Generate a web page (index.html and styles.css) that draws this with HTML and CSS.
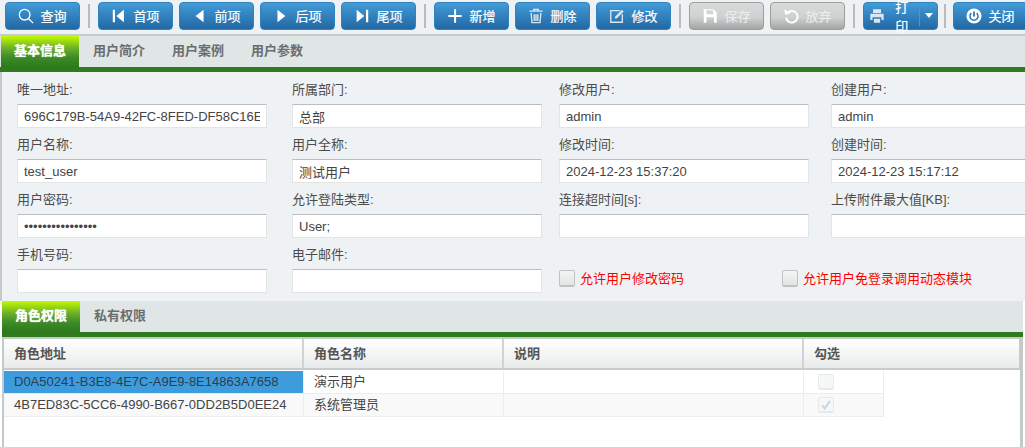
FILE: index.html
```html
<!DOCTYPE html>
<html lang="zh-CN">
<head>
<meta charset="utf-8">
<title>用户管理</title>
<link rel="stylesheet" href="styles.css">
</head>
<body>
<div class="toolbar">
  <button class="btn"><svg class="ico" viewBox="0 0 18 18"><circle cx="7.5" cy="7.5" r="6" class="st"/><path d="M12 12l5 5" class="st"/></svg>查询</button>
  <span class="sep"></span>
  <button class="btn"><svg class="ico" viewBox="0 0 18 18"><path d="M2 2h2.5v14H2zM14.5 2v14L6 9z" class="fl"/></svg>首项</button>
  <button class="btn"><svg class="ico" viewBox="0 0 18 18"><path d="M13 2v14L4 9z" class="fl"/></svg>前项</button>
  <button class="btn"><svg class="ico" viewBox="0 0 18 18"><path d="M5 2v14l9-7z" class="fl"/></svg>后项</button>
  <button class="btn"><svg class="ico" viewBox="0 0 18 18"><path d="M3 2v14l8.5-7zM13.5 2H16v14h-2.5z" class="fl"/></svg>尾项</button>
  <span class="sep"></span>
  <button class="btn"><svg class="ico" viewBox="0 0 18 18"><path d="M8 1.500h2.200V8h6.300v2.200h-6.300v6.300H8v-6.300H1.500V8H8z" class="fl"/></svg>新增</button>
  <button class="btn"><svg class="ico dim" viewBox="0 0 18 18"><path d="M1.500 3.500h15M6.500 3V1.500h5V3" class="st"/><path d="M3.500 5.500l1 11h9l1-11M7 7v7.500M9 7v7.500M11 7v7.500" class="st"/></svg>删除</button>
  <button class="btn"><svg class="ico dim" viewBox="0 0 18 18"><path d="M12 3H2v13h13V7" class="st"/><path d="M7 9.500L14.500 2 16.500 4 9 11.500l-2.500.5z" class="fl"/></svg>修改</button>
  <span class="sep"></span>
  <button class="btn off"><svg class="ico" viewBox="0 0 18 18"><path d="M2 1.500h11l3.500 3.500v11.500H2zM5 2.500v4.500h7.500V2.500zM5 10.500v6h8.500v-6z" class="fl" fill-rule="evenodd"/></svg>保存</button>
  <button class="btn off"><svg class="ico" viewBox="0 0 18 18"><path d="M5 5.500A6.500 6.500 0 1 1 3.500 11" class="st wide"/><path d="M1.500 1.500l1 6.500 6-2z" class="fl"/></svg>放弃</button>
  <span class="sep"></span>
  <button class="btn print"><svg class="ico dim" viewBox="0 0 18 18"><path d="M4.500 1.500h9v4h-9zM1.500 6.500h15v7h-2.500v-3h-10v3H1.500zM5.500 12h7v4.500h-7z" class="fl"/></svg>打印<span class="caret-box"><span class="caret"></span></span></button>
  <span class="sep narrow"></span>
  <button class="btn"><svg class="ico" viewBox="0 0 18 18"><circle cx="9" cy="9" r="8.500" class="fl"/><path d="M9 4v5.500" class="blue"/><path d="M6 5.800a4.500 4.500 0 1 0 6 0" class="blue thin"/></svg>关闭</button>
</div>

<div class="tabs">
  <span class="tab active">基本信息</span>
  <span class="tab">用户简介</span>
  <span class="tab">用户案例</span>
  <span class="tab">用户参数</span>
</div>

<form class="form">
  <label class="field"><span class="lbl">唯一地址:</span><input class="inp" value="696C179B-54A9-42FC-8FED-DF58C16E"></label>
  <label class="field"><span class="lbl">所属部门:</span><input class="inp" value="总部"></label>
  <label class="field"><span class="lbl">修改用户:</span><input class="inp" value="admin"></label>
  <label class="field"><span class="lbl">创建用户:</span><input class="inp" value="admin"></label>
  <label class="field"><span class="lbl">用户名称:</span><input class="inp" value="test_user"></label>
  <label class="field"><span class="lbl">用户全称:</span><input class="inp" value="测试用户"></label>
  <label class="field"><span class="lbl">修改时间:</span><input class="inp" value="2024-12-23 15:37:20"></label>
  <label class="field"><span class="lbl">创建时间:</span><input class="inp" value="2024-12-23 15:17:12"></label>
  <label class="field"><span class="lbl">用户密码:</span><input class="inp" type="password" value="1234567890123456"></label>
  <label class="field"><span class="lbl">允许登陆类型:</span><input class="inp" value="User;"></label>
  <label class="field"><span class="lbl">连接超时间[s]:</span><input class="inp"></label>
  <label class="field"><span class="lbl">上传附件最大值[KB]:</span><input class="inp"></label>
  <label class="field"><span class="lbl">手机号码:</span><input class="inp"></label>
  <label class="field"><span class="lbl">电子邮件:</span><input class="inp"></label>
  <div class="checks">
    <div class="chk chk-first"><span class="box"></span>允许用户修改密码</div>
    <div class="chk"><span class="box"></span>允许用户免登录调用动态模块</div>
  </div>
</form>

<div class="tabs tabs-sub">
  <span class="tab active">角色权限</span>
  <span class="tab">私有权限</span>
</div>

<div class="grid">
  <div class="ghead">
    <div class="gh c1">角色地址</div>
    <div class="gh c2">角色名称</div>
    <div class="gh c3">说明</div>
    <div class="gh c4w">勾选</div>
  </div>
  <div class="grow">
    <div class="gc c1 sel">D0A50241-B3E8-4E7C-A9E9-8E14863A7658</div>
    <div class="gc c2">演示用户</div>
    <div class="gc c3"></div>
    <div class="gc c4"><span class="box pale"></span></div>
  </div>
  <div class="grow alt">
    <div class="gc c1">4B7ED83C-5CC6-4990-B667-0DD2B5D0EE24</div>
    <div class="gc c2">系统管理员</div>
    <div class="gc c3"></div>
    <div class="gc c4"><span class="box pale"><svg viewBox="0 0 14 14" class="tick"><path d="M2.500 7.500l3 3.500 6-8.500"/></svg></span></div>
  </div>
</div>
</body>
</html>
```

FILE: styles.css
```css
* { box-sizing: border-box; }
html, body { margin: 0; padding: 0; height: 447px; overflow: hidden; background: #fff; }
body { font: 13px "Liberation Sans", "Noto Sans CJK SC", sans-serif; color: #444; width: 1025px; }

.toolbar {
  display: flex; align-items: center; height: 36px; padding: 0 0 3px 5px;
  background: #eff2f4; border-bottom: 2px solid #c6cbcb; gap: 6px;
}
.btn {
  display: flex; align-items: center; justify-content: center; gap: 6px;
  width: 75px; height: 28px; padding: 0; flex: none;
  border: 1px solid #2f83c0; border-radius: 4px;
  background: linear-gradient(#429bd8, #2268a3);
  color: #fff; font: 13px "Liberation Sans", "Noto Sans CJK SC", sans-serif;
  -webkit-text-stroke: .2px #fff;
}
.btn.off {
  border-color: #9a9e9e; color: #eceeee; -webkit-text-stroke: 0;
  background: linear-gradient(#d9dbdb 0, #cfd1d1 55%, #a3a5a5 100%);
}
.sep { width: 2px; height: 24px; background: #b8bcbc; margin: 0 2px; flex: none; }
.sep.narrow { margin: 0 1px 0 0; }
.ico { width: 16px; height: 16px; flex: none; }
.ico.dim { opacity: .82; }
.st { fill: none; stroke: #fff; stroke-width: 1.500; }
.st.wide { stroke-width: 2.200; }
.fl { fill: #fff; }
.blue { fill: none; stroke: #2c78b4; stroke-width: 2; }
.blue.thin { stroke-width: 1.700; }
.print { justify-content: flex-start; padding-left: 5px; }
.caret-box {
  display: flex; align-items: center; justify-content: center;
  width: 21px; height: 20px; margin-left: 1px; border-left: 1px solid #5b93bd;
}
.caret { border: 4px solid transparent; border-top: 5px solid #fff; border-bottom: 0; }

.tabs {
  display: flex; height: 36px; padding-left: 1px; gap: 1px;
  background: #e0e5e5; border-bottom: 5px solid #2e7a1c;
}
.tab {
  width: 78px; text-align: center; line-height: 30px;
  font-weight: bold; color: #6a6e6e;
}
.tab.active {
  color: #fff; text-shadow: 0 0 1px #fff;
  background: linear-gradient(#c2fa00 0, #6aae2a 40%, #3d8a28 70%, #2c7a1a 100%);
}

.form {
  display: grid; grid-template-columns: 275px 267px 272px 250px;
  grid-auto-rows: 55px; align-content: start;
  height: 229px; padding: 8px 0 0 15px; overflow: hidden;
  background: #eff2f4; border-left: 2px solid #c4caca;
}
.field { display: flex; flex-direction: column; width: 250px; }
.lbl { height: 24px; line-height: 20px; color: #4c4c4c; white-space: nowrap; }
.inp {
  width: 250px; height: 24px; padding: 0 6px; flex: none;
  border: 1px solid #e3e5e5; border-top-color: #bdbdbd; background: #fff;
  color: #444; font: 13px "Liberation Sans", "Noto Sans CJK SC", sans-serif; outline: 0;
}
.checks { grid-column: 3 / 5; display: flex; align-items: flex-start; padding-top: 25px; }
.chk { display: flex; align-items: center; gap: 5px; color: #f00; line-height: 17px; }
.chk-first { width: 223px; }
.box {
  display: flex; align-items: center; justify-content: center;
  width: 16px; height: 17px; flex: none;
  border: 1px solid #c0c2c2; border-bottom-width: 2px; border-radius: 2px;
  background: linear-gradient(#f4f5f5, #e2e4e4);
}
.box.pale { border-color: #e8e9e9; background: #f6f7f7; height: 16px; }
.tick { width: 12px; height: 12px; fill: none; stroke: #c4d8ea; stroke-width: 2.400; }

.tabs-sub { margin-left: 2px; width: 1021px; padding-left: 0; }

.grid {
  height: 110px; margin-left: 2px; width: 1021px;
  border: 2px solid #c4caca; border-width: 2px 3px 0 2px; background: #fff;
}
.ghead { display: flex; height: 31px; border-bottom: 2px solid #c6cbcb; background: linear-gradient(#fff, #e9ebeb); border-right: 1px solid #c6cbcb; }
.gh { font-weight: bold; color: #555; line-height: 29px; padding-left: 10px; border-right: 2px solid #cfd3d3; flex: none; }
.gh.c4w { flex: 1; border-right: 0; }
.grow { display: flex; height: 23px; width: 880px; border-bottom: 1px solid #ececec; margin-top: 0; }
.ghead + .grow { margin-top: 1px; }
.grow.alt { background: #f9f9f9; }
.gc { line-height: 21px; padding-left: 10px; color: #444; border-right: 1px solid #ececec; flex: none; white-space: nowrap; overflow: hidden; }
.gc.sel { background: #3f9cdc; color: #2c3e50; }
.c1 { width: 300px; }
.c2 { width: 200px; }
.c3 { width: 300px; }
.c4 { width: 80px; padding: 3px 0 0 14px; }
```
